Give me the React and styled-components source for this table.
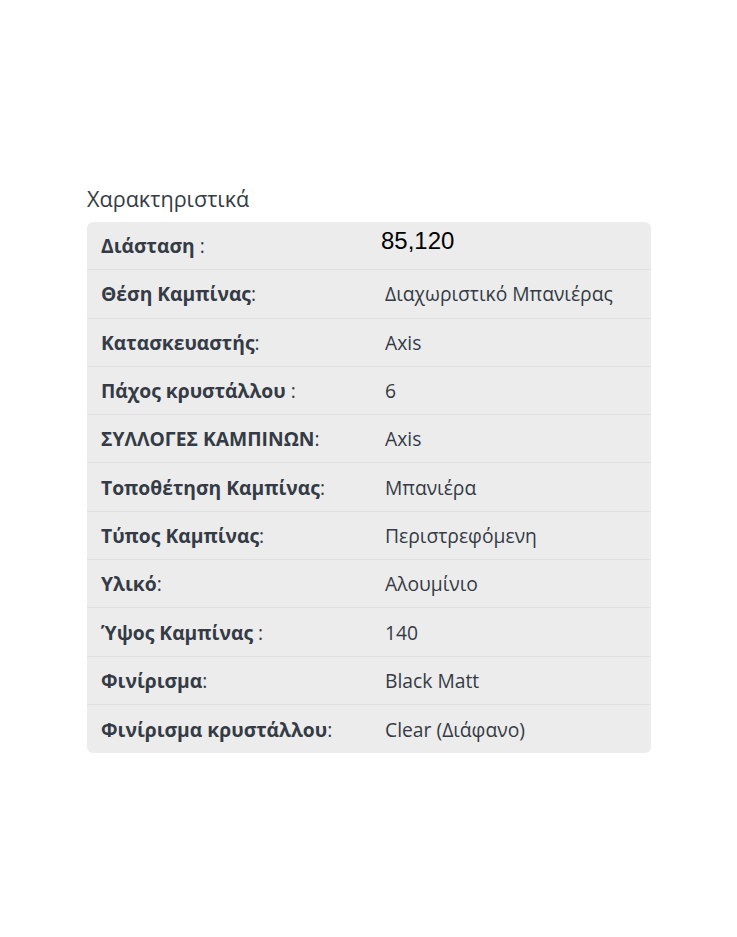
import React from 'react';
import styled, { createGlobalStyle } from 'styled-components';

const GlobalStyle = createGlobalStyle`
  body {
    margin: 0;
    background: #ffffff;
    font-family: "Open Sans", "Noto Sans", sans-serif;
    color: #353b45;
  }
`

const rows = [
  { label: 'Διάσταση', sep: ' :', value: '85,120', raw: true },
  { label: 'Θέση Καμπίνας', sep: ':', value: 'Διαχωριστικό Μπανιέρας' },
  { label: 'Κατασκευαστής', sep: ':', value: 'Axis' },
  { label: 'Πάχος κρυστάλλου', sep: ' :', value: '6' },
  { label: 'ΣΥΛΛΟΓΕΣ ΚΑΜΠΙΝΩΝ', sep: ':', value: 'Axis' },
  { label: 'Τοποθέτηση Καμπίνας', sep: ':', value: 'Μπανιέρα' },
  { label: 'Τύπος Καμπίνας', sep: ':', value: 'Περιστρεφόμενη' },
  { label: 'Υλικό', sep: ':', value: 'Αλουμίνιο' },
  { label: 'Ύψος Καμπίνας', sep: ' :', value: '140' },
  { label: 'Φινίρισμα', sep: ':', value: 'Black Matt' },
  { label: 'Φινίρισμα κρυστάλλου', sep: ':', value: 'Clear (Διάφανο)' },
];

export default function App() {
  return (
    <>
      <GlobalStyle />
      <Page>
        <Title>Χαρακτηριστικά</Title>
        <Table>
          {rows.map((row, i) => (
            <Row key={i} $last={i === rows.length - 1}>
              <Label>
                <strong>{row.label}</strong>{row.sep}
              </Label>
              <Value $raw={row.raw}>{row.value}</Value>
            </Row>
          ))}
        </Table>
      </Page>
    </>
  )
}

const Page = styled.div`
  padding: 184px 86px 0 87px;
  width: 564px;
`
const Title = styled.h3`
  margin: 0 0 8px;
  font-size: 21.6px;
  font-weight: 500;
  line-height: 30px;
  color: #353b45;
`
const Table = styled.div`
  background: #ececec;
  border-radius: 6px;
  overflow: hidden;
`
const Row = styled.div`
  display: grid;
  grid-template-columns: 298px 1fr;
  align-items: center;
  height: 48.3px;
  border-bottom: ${p => (p.$last ? 'none' : '1px solid #e0e0e0')};
  box-sizing: border-box;
`
const Label = styled.div`
  padding-left: 14px;
  font-size: 19.3px;
  strong {
    font-weight: 700;
  }
`
const Value = styled.div`
  font-size: ${p => (p.$raw ? '24px' : '19.3px')};
  font-family: ${p => (p.$raw ? '"Liberation Sans", Arial, sans-serif' : 'inherit')};
  color: ${p => (p.$raw ? '#000' : 'inherit')};
  margin-left: ${p => (p.$raw ? '-4px' : '0')};
  margin-top: ${p => (p.$raw ? '-9px' : '0')};
`
